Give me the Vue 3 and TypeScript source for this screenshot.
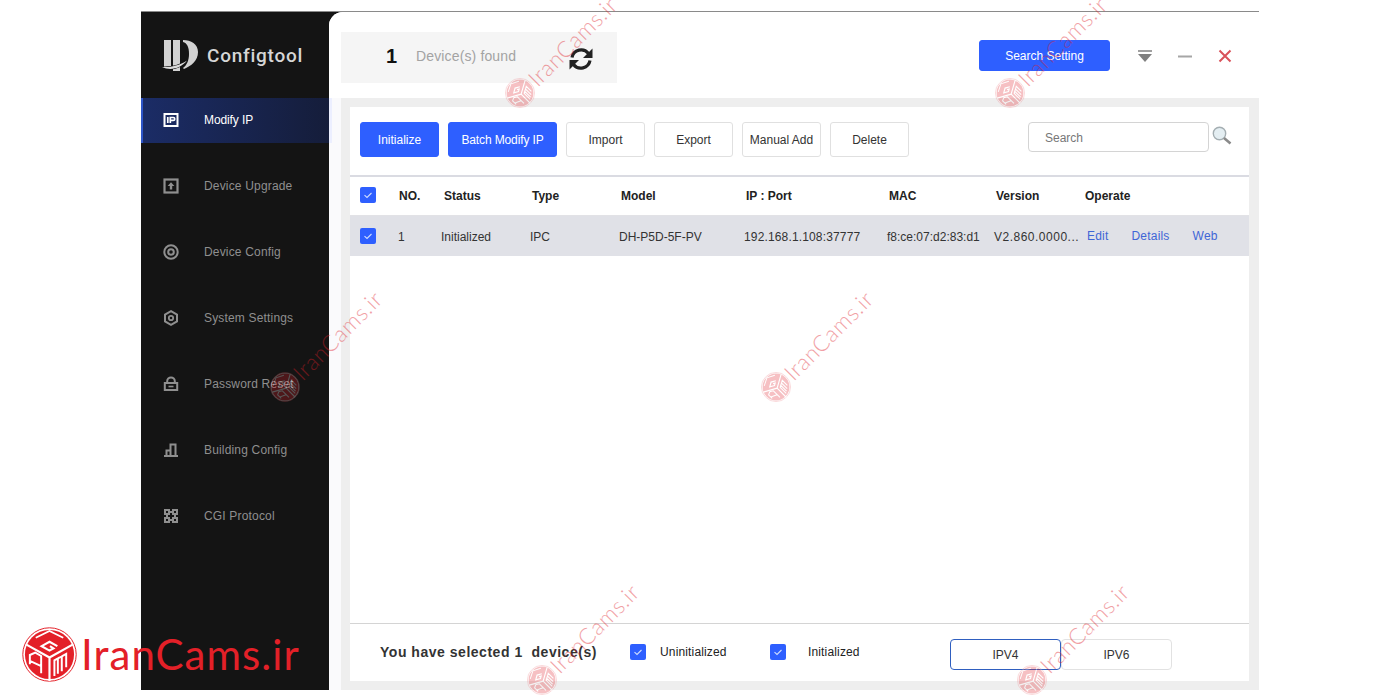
<script setup lang="ts">
interface NavItem { label: string; icon: string; active?: boolean }
const nav: NavItem[] = [
  { label: 'Modify IP', icon: 'ip', active: true },
  { label: 'Device Upgrade', icon: 'upgrade' },
  { label: 'Device Config', icon: 'config' },
  { label: 'System Settings', icon: 'settings' },
  { label: 'Password Reset', icon: 'password' },
  { label: 'Building Config', icon: 'building' },
  { label: 'CGI Protocol', icon: 'cgi' },
]
const toolbar = [
  { label: 'Initialize', primary: true, wide: false },
  { label: 'Batch Modify IP', primary: true, wide: true },
  { label: 'Import', primary: false, wide: false },
  { label: 'Export', primary: false, wide: false },
  { label: 'Manual Add', primary: false, wide: false },
  { label: 'Delete', primary: false, wide: false },
]
const headers = ['NO.', 'Status', 'Type', 'Model', 'IP : Port', 'MAC', 'Version', 'Operate']
const row = ['1', 'Initialized', 'IPC', 'DH-P5D-5F-PV', '192.168.1.108:37777', 'f8:ce:07:d2:83:d1', 'V2.860.0000...']
const marks = [
  { x: 505, y: 78 }, { x: 995, y: 78 }, { x: 270, y: 372 },
  { x: 761, y: 372 }, { x: 527, y: 665 }, { x: 1017, y: 665 },
]
</script>

<template>
  <div class="page">
    <svg class="defs" width="0" height="0" aria-hidden="true">
      <symbol id="brand" viewBox="0 0 56 56">
        <circle cx="28" cy="28" r="27.200" fill="#fff" stroke="currentColor" stroke-width="1" />
        <circle cx="28" cy="28" r="25" fill="currentColor" />
        <path d="M28 31 4.500 18M28 31 51.500 18M28 31v24" fill="none" stroke="#fff" stroke-width="2.200" />
        <path d="M36 19.500 28 15l-8 4.500 8 4.500 4-2.200-3.500-2.300" fill="none" stroke="#fff" stroke-width="2.200" />
        <path d="M14 11 28 4l14 7" fill="none" stroke="#fff" stroke-width="1.800" />
        <path d="M8 38V28.500l5.500-2.500 6 3.500V47M8 34.500l11 5M33 50V34l3.500-2v15.500M36.500 32l4-2v15M40.500 30l4.500-2.500V41" fill="none" stroke="#fff" stroke-width="2" />
      </symbol>
    </svg>

    <div class="window">
      <aside class="sidebar">
        <div class="brand">
          <svg class="ip-logo" viewBox="0 0 36 34" aria-hidden="true">
            <path d="M2 1h7v27H2zM11 1h7v31h-7z" fill="#d2d2d2" />
            <path d="M21 1c8 0 15 4 15 12 0 9-7 14-14 17l-1-1c4-3 6-8 6-14 0-7-2-11-6-12z" fill="#d2d2d2" />
            <path d="M0 28C8 28.500 17 27 25 21.500 19 29.500 8 32 0 28z" fill="#dcdcdc" stroke="#141414" stroke-width="1.200" paint-order="stroke" />
          </svg>
          <span class="brand-name">Configtool</span>
        </div>
        <nav class="nav">
          <div v-for="item in nav" :key="item.label" class="nav-item" :class="{ active: item.active }">
            <svg class="nav-icon" viewBox="0 0 16 16" aria-hidden="true">
              <template v-if="item.icon === 'ip'">
                <rect x="1.500" y="2" width="13" height="12" fill="none" stroke="currentColor" stroke-width="2" />
                <path d="M4.800 5v6M7.300 11V5.500h3a1.400 1.400 0 0 1 0 2.900h-3" fill="none" stroke="currentColor" stroke-width="1.700" />
              </template>
              <template v-else-if="item.icon === 'upgrade'">
                <rect x="1.500" y="1.500" width="13" height="13" fill="none" stroke="currentColor" stroke-width="2.200" />
                <path d="M8 4.200 11.400 8H9.200v3.400H6.800V8H4.600z" fill="currentColor" />
              </template>
              <template v-else-if="item.icon === 'config'">
                <circle cx="8" cy="8" r="6.700" fill="none" stroke="currentColor" stroke-width="2" />
                <circle cx="8" cy="8" r="2.800" fill="none" stroke="currentColor" stroke-width="2" />
              </template>
              <template v-else-if="item.icon === 'settings'">
                <path d="M8 1.200 14 4.600v6.800l-6 3.400-6-3.400V4.600z" fill="none" stroke="currentColor" stroke-width="2" />
                <circle cx="8" cy="8" r="2.200" fill="none" stroke="currentColor" stroke-width="1.800" />
              </template>
              <template v-else-if="item.icon === 'password'">
                <path d="M4.200 7V5.200a3.800 3.800 0 0 1 7.600 0V7" fill="none" stroke="currentColor" stroke-width="2" />
                <rect x="1.800" y="7" width="12.400" height="7" fill="none" stroke="currentColor" stroke-width="2" />
                <path d="M5.500 10.500h5" stroke="currentColor" stroke-width="1.600" />
              </template>
              <template v-else-if="item.icon === 'building'">
                <path d="M1 14h14M3.500 14V8.500h4M7.500 14V2.500h5V14" fill="none" stroke="currentColor" stroke-width="2" />
              </template>
              <template v-else>
                <path d="M2 2h4v4H2zM10 2h4v4h-4zM2 10h4v4H2zM10 10h4v4h-4z" fill="none" stroke="currentColor" stroke-width="2" />
                <path d="M6 4h4M6 12h4M4 6v4M12 6v4" stroke="currentColor" stroke-width="2" />
              </template>
            </svg>
            <span>{{ item.label }}</span>
          </div>
        </nav>
      </aside>

      <main class="main">
        <header class="topbar">
          <div class="found">
            <span class="found-count">1</span>
            <span class="found-label">Device(s) found</span>
            <svg class="refresh" viewBox="0 0 24 24" aria-hidden="true">
              <path d="M3 10.500A9.300 9.300 0 0 1 19.500 6.500" fill="none" stroke="#222" stroke-width="3.200" />
              <path d="M23.500 1.500v9.500h-9.500z" fill="#222" />
              <path d="M21 13.500A9.300 9.300 0 0 1 4.500 17.500" fill="none" stroke="#222" stroke-width="3.200" />
              <path d="M.5 22.500V13h9.500z" fill="#222" />
            </svg>
          </div>
          <button class="btn primary search-setting">Search Setting</button>
          <div class="win-controls">
            <svg width="16" height="14" viewBox="0 0 16 14" aria-hidden="true">
              <path d="M1 1h14v2H1z" fill="#a0a0a0" />
              <path d="M1 5h14l-7 8z" fill="#808080" />
            </svg>
            <svg width="16" height="14" viewBox="0 0 16 14" aria-hidden="true">
              <path d="M1 6.500h14v2H1z" fill="#a6a6a6" />
            </svg>
            <svg width="16" height="14" viewBox="0 0 16 14" aria-hidden="true">
              <path d="M2.500 1.500l11 11M13.500 1.500l-11 11" stroke="#d9525a" stroke-width="2" />
            </svg>
          </div>
        </header>

        <section class="panel">
          <div class="card">
            <div class="toolbar">
              <button
                v-for="b in toolbar"
                :key="b.label"
                class="btn tool"
                :class="{ primary: b.primary, wide: b.wide }"
              >{{ b.label }}</button>
              <div class="search">
                <div class="search-input">Search</div>
                <svg class="search-icon" viewBox="0 0 20 20" aria-hidden="true">
                  <circle cx="7.500" cy="7.500" r="6.200" fill="#e4eef2" stroke="#a4aeb2" stroke-width="1.400" />
                  <path d="M12 12l6.500 5.500" stroke="#8a8a8a" stroke-width="2.600" />
                </svg>
              </div>
            </div>

            <div class="thead">
              <span class="check head-check"><svg viewBox="0 0 16 16"><path d="M4.500 8.200 7 10.500l4.500-4.500" /></svg></span>
              <span v-for="h in headers" :key="h">{{ h }}</span>
            </div>
            <div class="trow">
              <span class="check"><svg viewBox="0 0 16 16"><path d="M4.500 8.200 7 10.500l4.500-4.500" /></svg></span>
              <span v-for="c in row" :key="c" class="cell">{{ c }}</span>
              <span class="ops">
                <a>Edit</a>
                <a>Details</a>
                <a>Web</a>
              </span>
            </div>
            <div class="spacer"></div>

            <footer class="footer">
              <span class="selected">You have selected 1&nbsp; device(s)</span>
              <label class="legend first">
                <span class="check"><svg viewBox="0 0 16 16"><path d="M4.500 8.200 7 10.500l4.500-4.500" /></svg></span>
                <span class="legend-text">Uninitialized</span>
              </label>
              <label class="legend second">
                <span class="check"><svg viewBox="0 0 16 16"><path d="M4.500 8.200 7 10.500l4.500-4.500" /></svg></span>
                <span class="legend-text alt">Initialized</span>
              </label>
              <div class="ipv">
                <span class="ipv-btn on">IPV4</span>
                <span class="ipv-btn">IPV6</span>
              </div>
            </footer>
          </div>
        </section>
      </main>
    </div>

    <div
      v-for="(m, i) in marks"
      :key="i"
      class="mark"
      :style="{ left: m.x + 'px', top: m.y + 'px' }"
    >
      <svg class="mark-logo" aria-hidden="true"><use href="#brand" /></svg>
      <span class="mark-text">IranCams.ir</span>
    </div>

    <div class="site">
      <svg class="site-logo" aria-hidden="true"><use href="#brand" /></svg>
      <span class="site-text">IranCams.ir</span>
    </div>
  </div>
</template>

<style>
html, body { margin: 0; background: #fff; }
</style>

<style scoped>
.page {
  position: relative;
  width: 1400px;
  height: 700px;
  overflow: hidden;
  box-sizing: border-box;
  padding: 11px 141px 10px;
  background: #fff;
  font-family: "Liberation Sans", Arial, sans-serif;
  font-size: 12px;
  color: #333;
}
.defs { position: absolute; }
.window {
  display: flex;
  height: 679px;
  background: #141414;
  border-top: 1px solid #8a8a8a;
  box-sizing: border-box;
}
.sidebar { width: 188px; flex: none; position: relative; z-index: 1; }
.brand { height: 86px; display: flex; align-items: center; padding-left: 21px; gap: 9px; box-sizing: border-box; }
.ip-logo { width: 36px; height: 34px; margin-top: 2px; }
.brand-name {
  font-family: Roboto, sans-serif;
  font-weight: 500;
  font-size: 19px;
  letter-spacing: .75px;
  color: #d6d6d6;
}
.nav { display: flex; flex-direction: column; gap: 21px; }
.nav-item {
  height: 45px;
  display: flex;
  align-items: center;
  box-sizing: border-box;
  padding: 0 0 2px 22px;
  gap: 25px;
  color: #8f8f8f;
  letter-spacing: .17px;
}
.nav-item.active {
  width: 191px;
  color: #fff;
  letter-spacing: -.1px;
  border-left: 2px solid #2d55c8;
  padding-left: 20px;
  background: linear-gradient(90deg, #1b2c66 0, #151d3a 186px, #ecefff 186px);
}
.nav-icon { width: 16px; height: 16px; flex: none; }
.main {
  flex: 1;
  min-width: 0;
  display: flex;
  flex-direction: column;
  background: #fafafc;
  border-top-left-radius: 14px;
  overflow: hidden;
}
.topbar {
  height: 86px;
  flex: none;
  background: #fff;
  display: flex;
  align-items: flex-start;
  padding-left: 12px;
  box-sizing: border-box;
}
.found {
  width: 276px;
  height: 51px;
  margin-top: 20px;
  background: #f5f5f5;
  display: flex;
  align-items: center;
  box-sizing: border-box;
  padding-left: 45px;
  flex: none;
}
.found-count { font-weight: 700; font-size: 20px; color: #111; width: 30px; margin-bottom: 3px; }
.found-label { font-size: 14px; letter-spacing: .14px; color: #a3a3a3; width: 153px; margin-bottom: 3px; }
.refresh { width: 24px; height: 24px; margin-top: 2px; }
.btn {
  font-family: inherit;
  font-size: 12px;
  border-radius: 3px;
  box-sizing: border-box;
  border: 1px solid #e0e0e0;
  background: #fff;
  color: #333;
  padding: 0;
}
.btn.primary { background: #2e5fff; border-color: #2e5fff; color: #fff; }
.search-setting { width: 131px; height: 31px; margin: 28px 0 0 362px; flex: none; }
.win-controls { display: flex; gap: 24px; margin: 37px 0 0 26.5px; }
.panel {
  flex: 1;
  min-height: 0;
  margin-left: 12px;
  background: #eeeeee;
  padding: 9px 10px 9px 9px;
  display: flex;
}
.card { flex: 1; background: #fff; display: flex; flex-direction: column; min-width: 0; }
.toolbar {
  height: 68px;
  flex: none;
  display: flex;
  align-items: flex-start;
  gap: 9px;
  padding: 15px 0 0 10px;
  box-sizing: border-box;
}
.tool { width: 79px; height: 35px; flex: none; }
.tool.wide { width: 109px; letter-spacing: -.12px; }
.search { display: flex; margin-left: 110px; gap: 3px; }
.search-input {
  width: 181px;
  height: 30px;
  box-sizing: border-box;
  border: 1px solid #d4d4d4;
  border-radius: 4px;
  padding-left: 16px;
  line-height: 31px;
  color: #777;
}
.search-icon { width: 20px; height: 20px; margin-top: 4px; }
.thead, .trow { display: grid; align-items: center; padding-left: 10px; flex: none; }
.thead {
  height: 41px;
  border-top: 2px solid #dadbe2;
  border-bottom: 1px solid #e2e2e6;
  box-sizing: border-box;
  grid-template-columns: 39px 45px 88px 89px 125px 143px 107px 89px 1fr;
  font-weight: 700;
  color: #222;
}
.trow {
  height: 40px;
  background: #e0e1e7;
  grid-template-columns: 38px 43px 89px 89px 125px 143px 107px 93px 1fr;
  color: #333;
  white-space: nowrap;
}
.cell { margin-top: 2px; }
.cell:nth-child(6) { letter-spacing: .15px; }
.cell:nth-child(8) { letter-spacing: .5px; }
.check {
  width: 16px;
  height: 16px;
  border-radius: 2px;
  background: #2e5fff;
  display: block;
}
.head-check { margin-top: -2px; }
.check svg { display: block; width: 16px; height: 16px; fill: none; stroke: #cfdcff; stroke-width: 1.1; }
.ops { display: flex; gap: 23px; margin-top: -1px; color: #3f66d6; white-space: nowrap; letter-spacing: .2px; }
.spacer { flex: 1; }
.footer {
  height: 58px;
  flex: none;
  border-top: 1px solid #d4d4d4;
  box-sizing: border-box;
  display: flex;
  align-items: center;
  padding: 0 0 1px 30px;
}
.selected { font-size: 14px; font-weight: 700; color: #333; width: 250px; flex: none; letter-spacing: .52px; white-space: nowrap; }
.legend { display: flex; align-items: center; flex: none; }
.legend.first { width: 140px; }
.legend.second { width: 180px; }
.legend-text { margin-left: 14px; color: #222; letter-spacing: .15px; }
.legend-text.alt { margin-left: 22px; }
.ipv { display: flex; margin-top: 5px; }
.ipv-btn {
  width: 111px;
  height: 31px;
  box-sizing: border-box;
  border: 1px solid #e2e2e2;
  border-radius: 4px;
  display: flex;
  align-items: center;
  justify-content: center;
  padding-top: 1px;
  color: #333;
}
.ipv-btn.on { border-color: #2f5fc0; }
.mark {
  position: absolute;
  width: 150px;
  height: 30px;
  display: flex;
  align-items: center;
  gap: 1px;
  color: #e0202a;
  transform-origin: 15px 15px;
  transform: rotate(-45deg);
  pointer-events: none;
  z-index: 2;
}
.mark-logo { width: 30px; height: 30px; flex: none; opacity: .28; }
.mark-text {
  font-family: Lato, sans-serif;
  font-weight: 300;
  font-size: 22.5px;
  letter-spacing: .6px;
  white-space: nowrap;
  color: #e0202a;
  opacity: .42;
}
.site {
  position: absolute;
  left: 22px;
  top: 627px;
  display: flex;
  align-items: center;
  gap: 4px;
  color: #e32028;
  z-index: 3;
}
.site-logo { width: 55px; height: 55px; flex: none; }
.site-text { font-family: Lato, sans-serif; font-size: 42px; line-height: 55px; white-space: nowrap; letter-spacing: 1.05px; }
</style>
